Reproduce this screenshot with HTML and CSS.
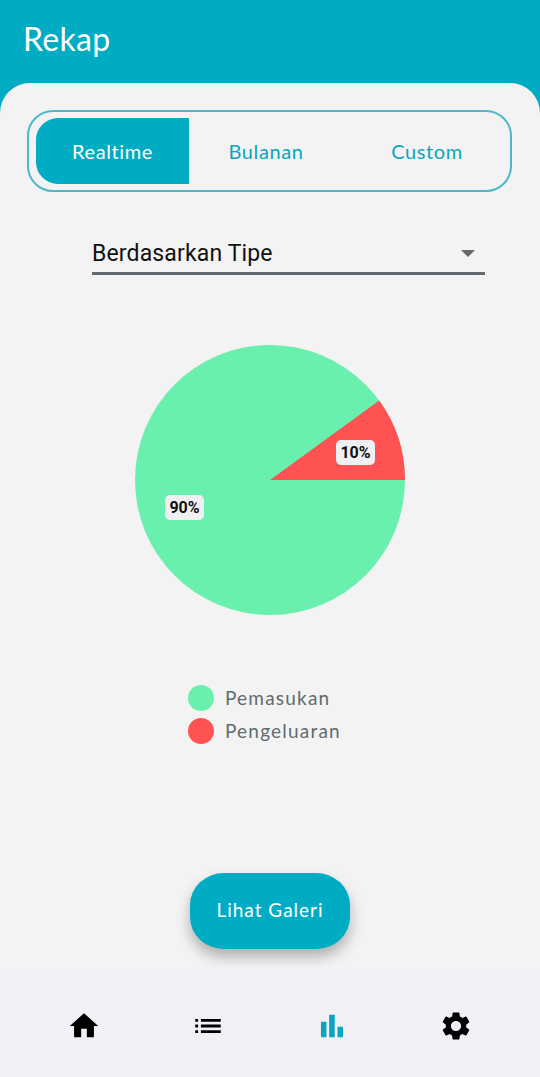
FILE: index.html
```html
<!DOCTYPE html>
<html>

<head>
    <title>Rekap</title>
    <link rel="stylesheet" href="styles.css">
</head>

<body>
    <div class="app">
        <header class="header">
            <h1>Rekap</h1>
        </header>

        <main class="panel">
            <div class="tabs">
                <div class="tab active">Realtime</div>
                <div class="tab tab-mid">Bulanan</div>
                <div class="tab tab-last">Custom</div>
            </div>

            <div class="dropdown">
                <span>Berdasarkan Tipe</span>
                <div class="arrow"></div>
            </div>

            <div class="chart">
                <svg class="pie" viewBox="0 0 270 270" width="270" height="270">
                    <circle cx="135" cy="135" r="135" fill="#69f0ae" />
                    <path d="M135 135 L270 135 A135 135 0 0 0 244.2 55.6 Z" fill="#ff5252" />
                </svg>
                <div class="pie-label label-red">10%</div>
                <div class="pie-label label-green">90%</div>
            </div>

            <div class="legend">
                <div class="legend-row"><div class="dot green"></div><span class="legend-text">Pemasukan</span></div>
                <div class="legend-row"><div class="dot red"></div><span class="legend-text">Pengeluaran</span></div>
            </div>

            <button class="btn">Lihat Galeri</button>
        </main>

        <nav class="nav">
            <svg viewBox="0 0 24 24" class="nav-icon"><path d="M10 20v-6h4v6h5v-8h3L12 3 2 12h3v8z" /></svg>
            <svg viewBox="0 0 24 24" class="nav-icon"><path d="M3 13h2v-2H3v2zm0 4h2v-2H3v2zm0-8h2V7H3v2zm4 4h14v-2H7v2zm0 4h14v-2H7v2zM7 7v2h14V7H7z" /></svg>
            <svg viewBox="0 0 24 24" class="nav-icon current"><path d="M4.200 9h3.900v11H4.200zM10 4h3.900v16H10zm5.900 8.500h3.900V20h-3.900z" /></svg>
            <svg viewBox="0 0 24 24" class="nav-icon"><path d="M19.140 12.940c.04-.3.060-.61.060-.94 0-.32-.02-.64-.07-.94l2.030-1.580a.49.49 0 0 0 .12-.61l-1.920-3.320a.488.488 0 0 0-.59-.22l-2.390.96c-.5-.38-1.030-.7-1.620-.94l-.36-2.540a.484.484 0 0 0-.48-.41h-3.840c-.24 0-.43.170-.47.410l-.36 2.540c-.59.240-1.130.570-1.620.94l-2.390-.96c-.22-.08-.47 0-.59.220L2.740 8.870c-.12.210-.08.470.12.610l2.030 1.580c-.05.300-.09.630-.09.940s.02.640.07.940l-2.030 1.580a.49.49 0 0 0-.12.610l1.920 3.320c.12.220.37.290.59.220l2.390-.96c.5.380 1.030.7 1.620.94l.36 2.540c.05.240.24.410.48.410h3.840c.24 0 .44-.17.470-.41l.36-2.540c.59-.24 1.130-.56 1.620-.94l2.390.96c.22.080.47 0 .59-.22l1.920-3.320c.12-.22.07-.47-.12-.61l-2.010-1.580zM12 15.600c-1.980 0-3.600-1.620-3.600-3.600s1.620-3.600 3.600-3.600 3.600 1.620 3.600 3.600-1.620 3.600-3.600 3.600z" /></svg>
        </nav>
    </div>
</body>

</html>
```

FILE: styles.css
```css
* {
    box-sizing: border-box;
}

body {
    margin: 0;
    font-family: "Lato", "Open Sans", sans-serif;
}

.app {
    display: flex;
    flex-direction: column;
    height: 1077px;
    overflow: hidden;
    background-color: #00abc4;
}

.header {
    height: 83px;
    padding: 19px 23px 0;
}

.header h1 {
    margin: 0;
    color: #fff;
    font-size: 32px;
    font-weight: 400;
    line-height: 40px;
    letter-spacing: 0.3px;
}

.panel {
    flex: 1;
    display: flex;
    flex-direction: column;
    padding-top: 27px;
    border-radius: 30px 30px 0 0;
    background-color: #f3f3f3;
}

.tabs {
    display: flex;
    align-items: stretch;
    width: 485px;
    height: 82px;
    margin-left: 27px;
    padding: 6px 7px;
    border: 2px solid #4db8ca;
    border-radius: 26px;
}

.tab {
    display: flex;
    flex-shrink: 0;
    align-items: center;
    justify-content: center;
    color: #0aa6bf;
    font-size: 20px;
    letter-spacing: 0.6px;
}

.tab.active {
    width: 153px;
    border-radius: 22px 0 0 22px;
    background-color: #00abc4;
    color: #fff;
}

.tab-mid {
    width: 154px;
}

.tab-last {
    width: 160px;
    padding-left: 8px;
}

.dropdown {
    display: flex;
    align-items: center;
    justify-content: space-between;
    width: 393px;
    height: 43px;
    margin: 40px 0 0 92px;
    padding: 2px 10px 0 0;
    border-bottom: 3px solid #5f6b6f;
    color: #111;
    font-family: "Roboto", sans-serif;
    font-size: 23px;
    letter-spacing: 0.15px;
}

.arrow {
    width: 0;
    height: 0;
    border-left: 7px solid transparent;
    border-right: 7px solid transparent;
    border-top: 7px solid #666;
}

.chart {
    position: relative;
    width: 270px;
    height: 270px;
    margin: 70px 0 0 135px;
}

.pie {
    display: block;
}

.pie-label {
    position: absolute;
    width: 39px;
    height: 25px;
    border-radius: 5px;
    background-color: #f0f0f2;
    color: #111;
    font-family: "Roboto", sans-serif;
    font-size: 16px;
    font-weight: 700;
    line-height: 25px;
    text-align: center;
}

.label-red {
    left: 201px;
    top: 95px;
}

.label-green {
    left: 30px;
    top: 150px;
}

.legend {
    display: flex;
    flex-direction: column;
    gap: 7px;
    margin: 70px 0 0 188px;
}

.legend-row {
    display: flex;
    align-items: center;
    gap: 11px;
    color: #5f6b6f;
    font-size: 19px;
    letter-spacing: 1.2px;
}

.legend-text {
    padding-bottom: 2px;
}

.dot {
    width: 26px;
    height: 26px;
    border-radius: 50%;
}

.dot.green {
    background-color: #69f0ae;
}

.dot.red {
    background-color: #ff5252;
}

.btn {
    align-self: center;
    width: 160px;
    height: 76px;
    margin-top: 129px;
    padding-bottom: 4px;
    border: none;
    border-radius: 34px / 32px;
    background-color: #00abc4;
    box-shadow: 0 8px 14px rgba(0, 0, 0, 0.28);
    color: #fff;
    font-family: inherit;
    font-size: 19px;
    letter-spacing: 1px;
}

.nav {
    display: flex;
    justify-content: space-around;
    height: 107px;
    padding: 39px 22px 0;
    background-color: #f3eff7;
}

.nav-icon {
    width: 34px;
    height: 34px;
    fill: #000;
}

.nav-icon.current {
    fill: #0aa6bf;
}
```
